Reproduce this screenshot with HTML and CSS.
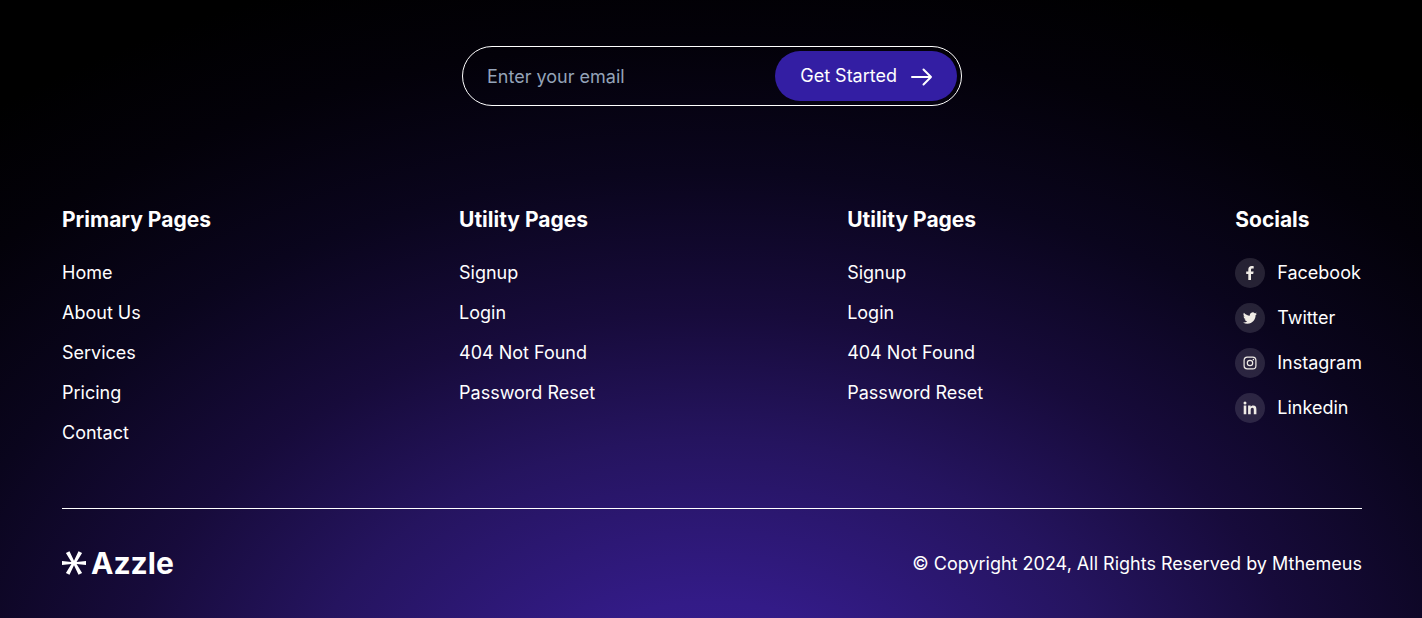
FILE: index.html
```html
<!DOCTYPE html>
<html lang="en">
<head>
<meta charset="utf-8">
<meta name="viewport" content="width=device-width, initial-scale=1">
<title>Azzle</title>
<link rel="stylesheet" href="styles.css">
</head>
<body>
<footer class="footer">
  <form class="signup">
    <input class="signup-input" type="email" placeholder="Enter your email" aria-label="Enter your email">
    <button class="signup-button" type="button">Get Started
      <svg class="arrow" viewBox="0 0 22 20" aria-hidden="true"><path d="M1 11H20M12.500 3.500L20 11L12.500 18.500"/></svg>
    </button>
  </form>
  <nav class="columns" aria-label="Footer">
    <section class="primary">
      <h2 class="title">Primary Pages</h2>
      <ul class="links">
        <li><a href="#">Home</a></li>
        <li><a href="#">About Us</a></li>
        <li><a href="#">Services</a></li>
        <li><a href="#">Pricing</a></li>
        <li><a href="#">Contact</a></li>
      </ul>
    </section>
    <section>
      <h2 class="title">Utility Pages</h2>
      <ul class="links">
        <li><a href="#">Signup</a></li>
        <li><a href="#">Login</a></li>
        <li><a href="#">404 Not Found</a></li>
        <li><a href="#">Password Reset</a></li>
      </ul>
    </section>
    <section>
      <h2 class="title">Utility Pages</h2>
      <ul class="links">
        <li><a href="#">Signup</a></li>
        <li><a href="#">Login</a></li>
        <li><a href="#">404 Not Found</a></li>
        <li><a href="#">Password Reset</a></li>
      </ul>
    </section>
    <section>
      <h2 class="title">Socials</h2>
      <ul class="links socials">
        <li><a class="social" href="#"><span class="badge"><svg viewBox="0 0 14 14" aria-hidden="true"><path d="M5.300 14V8H3.200V5.500H5.300V3.700C5.300 1.400 6.600.1 8.700.1C9.600.1 10.400.2 10.700.3V2.500H9.400C8.400 2.500 8 3 8 3.900V5.500H10.600L10.200 8H8V14Z"/></svg></span>Facebook</a></li>
        <li><a class="social" href="#"><span class="badge"><svg viewBox="0 0 24 24" aria-hidden="true"><path d="M23.950 4.570a10 10 0 0 1-2.820.78 4.960 4.960 0 0 0 2.160-2.730 9.900 9.900 0 0 1-3.120 1.190 4.920 4.920 0 0 0-8.390 4.490C7.690 8.100 4.070 6.130 1.640 3.160a4.920 4.920 0 0 0 1.520 6.570 4.900 4.900 0 0 1-2.230-.61v.06a4.920 4.920 0 0 0 3.950 4.830 5 5 0 0 1-2.210.08 4.940 4.940 0 0 0 4.600 3.420A9.870 9.870 0 0 1 0 19.540a13.990 13.990 0 0 0 7.550 2.210c9.050 0 14-7.500 14-13.980 0-.21 0-.42-.02-.63a9.940 9.940 0 0 0 2.460-2.550z"/></svg></span>Twitter</a></li>
        <li><a class="social" href="#"><span class="badge"><svg viewBox="0 0 14 14" aria-hidden="true"><rect class="line" x="1.100" y="1.100" width="11.800" height="11.800" rx="3.200"/><circle class="line" cx="7" cy="7" r="2.700"/><circle cx="10.400" cy="3.600" r=".8"/></svg></span>Instagram</a></li>
        <li><a class="social" href="#"><span class="badge"><svg viewBox="0 0 14 14" aria-hidden="true"><circle cx="2" cy="2" r="1.500"/><path d="M.7 4.600H3.300V13.200H.7ZM5.100 4.600H7.600V5.700C8 5 8.900 4.400 10.100 4.400C12.700 4.400 13.400 6 13.400 8.400V13.200H10.800V9C10.800 7.900 10.700 6.700 9.400 6.700C8 6.700 7.700 7.700 7.700 8.900V13.200H5.100Z"/></svg></span>Linkedin</a></li>
      </ul>
    </section>
  </nav>
  <div class="bottom">
    <a class="logo" href="#"><svg class="mark" viewBox="0 0 24 24" aria-hidden="true"><path d="M0 9.900L9.400 10.900L3.900 2.100L7.500.2L12 9.800L16.500.2L20.100 2.100L14.600 10.900L24 9.900V14.100L14.600 13.100L20.100 21.900L16.500 23.800L12 14.200L7.500 23.800L3.900 21.900L9.400 13.100L0 14.100Z"/></svg>Azzle</a>
    <p class="copyright">© Copyright 2024, All Rights Reserved by Mthemeus</p>
  </div>
</footer>
</body>
</html>
```
FILE: styles.css
```css
* { box-sizing: border-box; }

body {
  margin: 0;
  background: #000;
  color: #fff;
  font: 18px/28px Inter, "Liberation Sans", sans-serif;
}

a { color: inherit; text-decoration: none; }

.footer {
  min-height: 100vh;
  padding: 46px 60px 36px 62px;
  background: radial-gradient(ellipse 1080px 740px at 50% 720px, #381e96 0%, #331b87 16%, #25145f 38%, #170b3b 55%, #0a051d 74%, #030109 92%, #000 106%);
}

.signup {
  display: flex;
  width: 100%;
  max-width: 500px;
  height: 60px;
  margin: 0 auto;
  padding: 4px;
  border: 1px solid #fff;
  border-radius: 30px;
}

.signup-input {
  flex: 1;
  min-width: 0;
  padding: 2px 20px 0;
  border: 0;
  outline: 0;
  background: transparent;
  color: #fff;
  font: inherit;
}

.signup-input::placeholder { color: #94a3b8; opacity: 1; }

.signup-button {
  display: flex;
  align-items: center;
  gap: 14px;
  padding: 0 24px 0 25px;
  border: 0;
  border-radius: 25px;
  background: #331ea3;
  color: #fff;
  font: inherit;
}

.arrow {
  width: 22px;
  height: 20px;
  fill: none;
  stroke: #fff;
  stroke-width: 2;
  stroke-linecap: round;
  stroke-linejoin: round;
}

.columns {
  display: flex;
  flex-wrap: wrap;
  justify-content: space-between;
  gap: 40px;
  padding: 98px 0 60px;
  border-bottom: 1px solid #fff;
}

.primary { width: 145px; }

.title {
  margin: 0 0 22px;
  font-size: 21px;
  line-height: 32px;
  font-weight: 700;
  white-space: nowrap;
}

.links {
  display: flex;
  flex-direction: column;
  gap: 10px;
  margin: 0;
  padding: 0;
  line-height: 30px;
  list-style: none;
}

.socials { gap: 15px; }

.social { display: flex; align-items: center; gap: 12px; }

.badge {
  display: grid;
  place-items: center;
  width: 30px;
  height: 30px;
  border-radius: 50%;
  background: rgba(255, 255, 255, 0.12);
}

.badge svg { width: 14px; height: 14px; fill: #f0ece6; }

.badge .line { fill: none; stroke: #f0ece6; stroke-width: 1.200; }

.bottom {
  display: flex;
  flex-wrap: wrap;
  align-items: center;
  justify-content: space-between;
  gap: 20px;
  padding-top: 36px;
}

.logo {
  display: flex;
  align-items: center;
  gap: 5px;
  font-size: 30px;
  line-height: 36px;
  font-weight: 700;
}

.mark { width: 24px; height: 24px; fill: #fff; }

.copyright { margin: 0; padding-top: 2px; }
```
